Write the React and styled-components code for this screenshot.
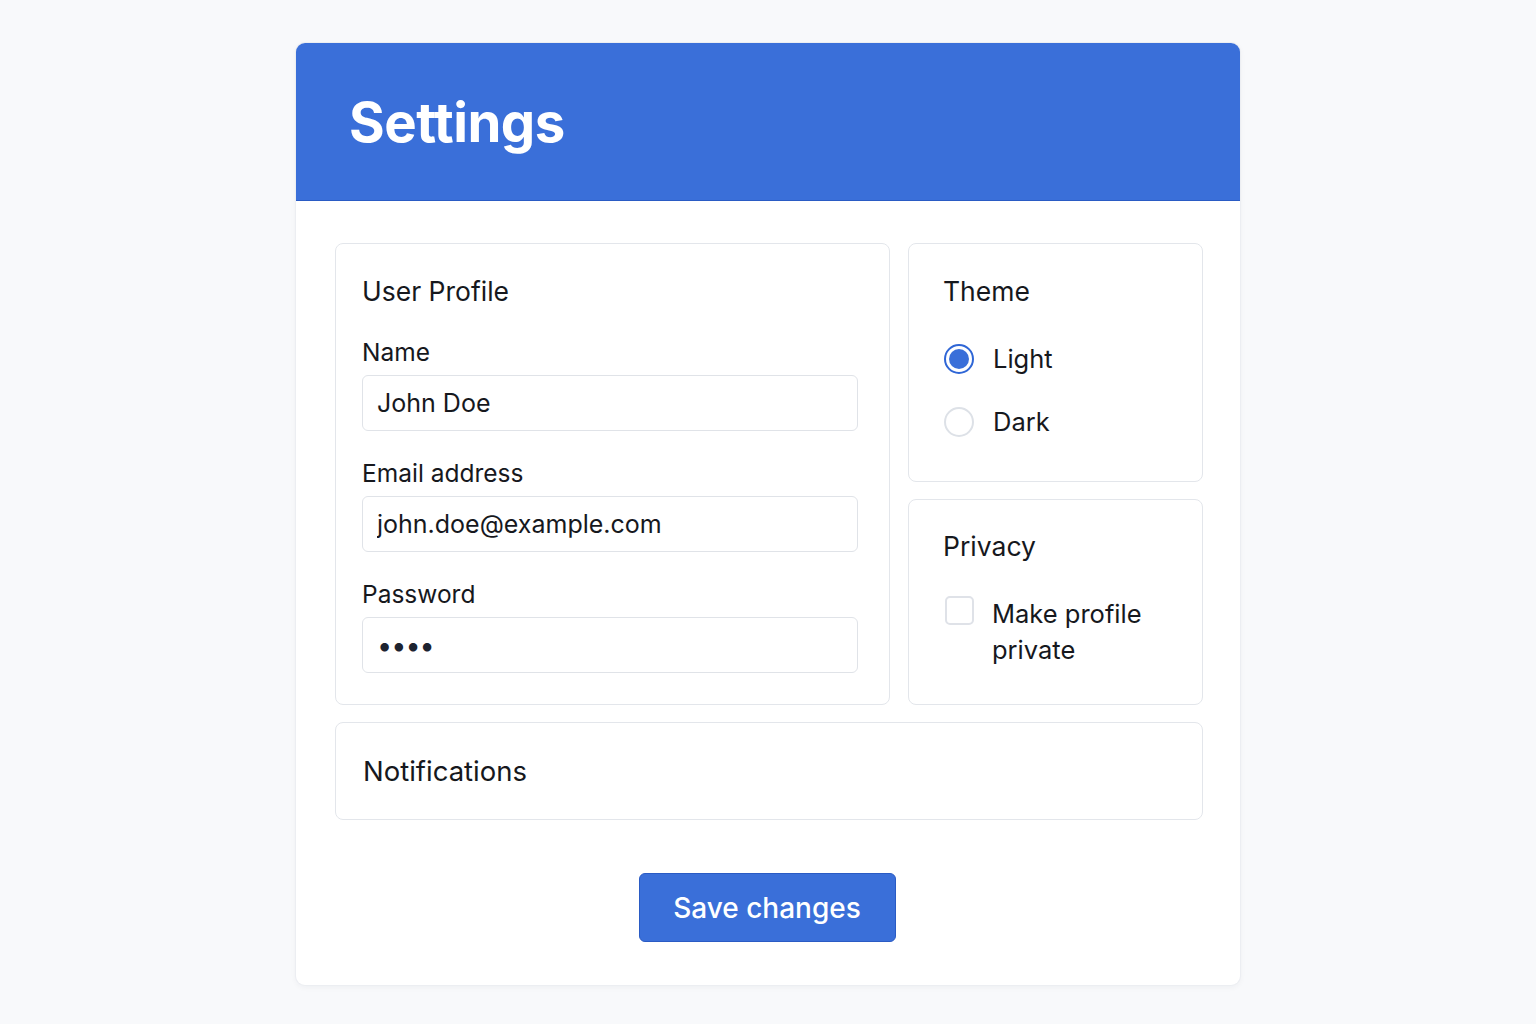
import React, { useState } from 'react';
import styled, { createGlobalStyle } from 'styled-components';

const GlobalStyle = createGlobalStyle`
  body {
    margin: 0;
    background: #f8f9fb;
    font-family: Inter, "Noto Sans", sans-serif;
    color: #16181d;
  }
`;

const Page = styled.div`
  display: flex;
  justify-content: center;
  padding: 43px 0 40px;
`;

const Card = styled.div`
  width: 944px;
  background: #fff;
  border-radius: 9px;
  box-shadow: 0 0 0 1px #eceef2, 0 2px 6px rgba(20, 30, 50, 0.05);
  overflow: hidden;
`;

const Header = styled.div`
  height: 157px;
  background: #3a6fd9;
  border-bottom: 1px solid #2a5bc4;
  display: flex;
  align-items: center;
  padding: 0 53px;
`;

const Title = styled.h1`
  margin: 0;
  color: #fff;
  font-size: 54.5px;
  font-weight: 700;
  letter-spacing: -0.5px;
`;

const Body = styled.div`
  padding: 42px 37px 43px 39px;
`;

const Grid = styled.div`
  display: grid;
  grid-template-columns: 555px 1fr;
  gap: 17px 18px;
`;

const Column = styled.div`
  display: flex;
  flex-direction: column;
  gap: 17px;
`;

const Panel = styled.section`
  border: 1px solid #e3e6eb;
  border-radius: 8px;
  padding: ${(p) => p.$pad || '30px 31px 31px 26px'};
  grid-column: ${(p) => (p.$wide ? '1 / -1' : 'auto')};
  flex: ${(p) => (p.$fill ? '1' : 'none')};
`;

const PanelTitle = styled.h2`
  margin: 0 0 ${(p) => p.$gap || '26px'};
  font-size: ${(p) => p.$size || '26.5px'};
  font-weight: 400;
  line-height: 34px;
`;

const Label = styled.label`
  display: block;
  font-size: 24.5px;
  line-height: 30px;
  margin-bottom: 8px;
`;

const Field = styled.div`
  & + & {
    margin-top: 27px;
  }
`;

const Input = styled.input`
  box-sizing: border-box;
  width: 100%;
  height: 56px;
  border: 1px solid #e0e3e8;
  border-radius: 6px;
  padding: 0 14px;
  font-family: inherit;
  font-size: 25px;
  color: #16181d;
  background: #fff;
  outline: none;
  &[type='password'] {
    font-size: 27px;
    letter-spacing: -1px;
    color: #1d2330;
  }
`;

const Option = styled.label`
  display: flex;
  align-items: ${(p) => (p.$top ? 'flex-start' : 'center')};
  gap: ${(p) => (p.$top ? '18px' : '19px')};
  font-size: 25.5px;
  line-height: 36px;
  cursor: pointer;
  & + & {
    margin-top: 27px;
  }
`;

const Radio = styled.span`
  box-sizing: border-box;
  flex: none;
  width: 30px;
  height: 30px;
  margin-left: 1px;
  border-radius: 50%;
  border: 2px solid ${(p) => (p.$on ? '#2f66d6' : '#dde1e7')};
  display: flex;
  align-items: center;
  justify-content: center;
  &::after {
    content: '';
    width: 20px;
    height: 20px;
    border-radius: 50%;
    background: ${(p) => (p.$on ? '#3a6fd9' : 'transparent')};
  }
`;

const Check = styled.span`
  box-sizing: border-box;
  flex: none;
  width: 29px;
  height: 29px;
  margin: 0 0 0 2px;
  border: 2px solid #dfe2e8;
  border-radius: 5px;
  background: ${(p) => (p.$on ? '#3a6fd9' : '#fff')};
`;

const Footer = styled.div`
  display: flex;
  justify-content: center;
  margin-top: 53px;
  padding-right: 4px;
`;

const SaveButton = styled.button`
  width: 257px;
  height: 69px;
  border: 1px solid #2a5bc4;
  border-radius: 6px;
  background: #3a6fd9;
  color: #fff;
  font-family: inherit;
  font-size: 28px;
  font-weight: 500;
  cursor: pointer;
`;

export default function App() {
  const [theme, setTheme] = useState('light');
  const [priv, setPriv] = useState(false);
  return (
    <>
      <GlobalStyle />
      <Page>
        <Card>
          <Header>
            <Title>Settings</Title>
          </Header>
          <Body>
            <Grid>
              <Panel>
                <PanelTitle $gap="29px">User Profile</PanelTitle>
                <Field>
                  <Label>Name</Label>
                  <Input defaultValue="John Doe" />
                </Field>
                <Field>
                  <Label>Email address</Label>
                  <Input defaultValue="john.doe@example.com" />
                </Field>
                <Field>
                  <Label>Password</Label>
                  <Input type="password" defaultValue="1234" />
                </Field>
              </Panel>
              <Column>
                <Panel $pad="30px 30px 41px 34px">
                  <PanelTitle $gap="33px">Theme</PanelTitle>
                  <Option onClick={() => setTheme('light')}>
                    <Radio $on={theme === 'light'} />
                    Light
                  </Option>
                  <Option onClick={() => setTheme('dark')}>
                    <Radio $on={theme === 'dark'} />
                    Dark
                  </Option>
                </Panel>
                <Panel $fill $pad="29px 30px 30px 34px">
                  <PanelTitle $gap="33px">Privacy</PanelTitle>
                  <Option $top onClick={() => setPriv(!priv)}>
                    <Check $on={priv} />
                    <span>
                      Make profile
                      <br />
                      private
                    </span>
                  </Option>
                </Panel>
              </Column>
              <Panel $wide $pad="31px 27px 31px 27px">
                <PanelTitle $gap="0" $size="27.5px">
                  Notifications
                </PanelTitle>
              </Panel>
            </Grid>
            <Footer>
              <SaveButton>Save changes</SaveButton>
            </Footer>
          </Body>
        </Card>
      </Page>
    </>
  );
}
